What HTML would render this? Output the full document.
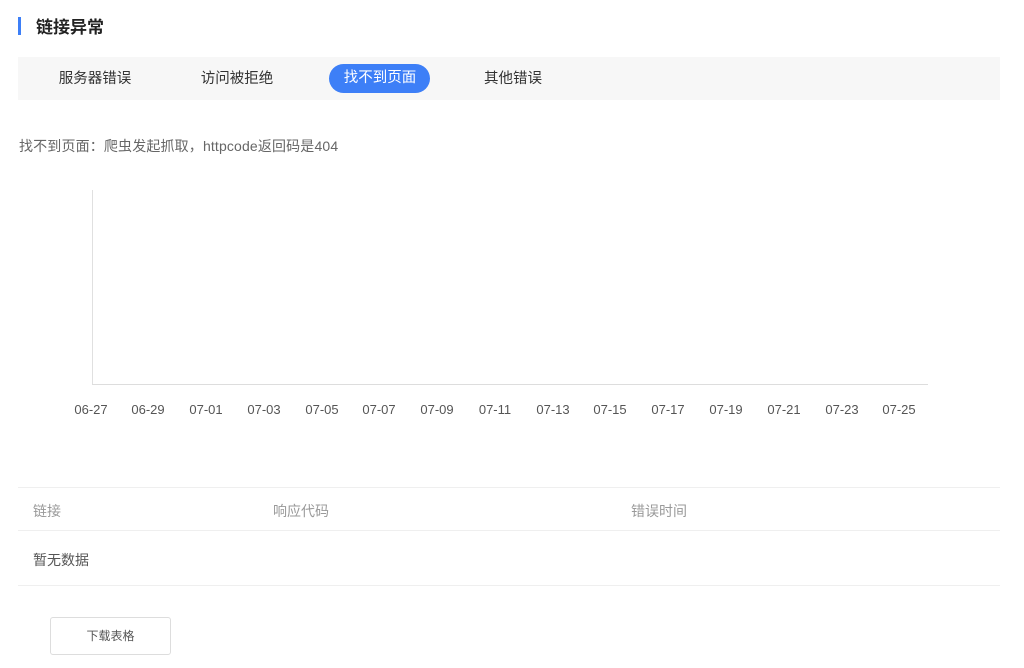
<!DOCTYPE html>
<html><head><meta charset="utf-8"><style>
body{margin:0;width:1024px;height:668px;background:#fff;font-family:"Liberation Sans","Noto Sans CJK SC",sans-serif;position:relative;overflow:hidden}
.a{position:absolute;white-space:nowrap}
.tab{position:absolute;top:65px;height:29px;line-height:29px;font-size:14.5px;color:#333;text-align:center;width:110px}
.xl{position:absolute;top:402px;font-size:13px;color:#555;width:50px;text-align:center}
.line{position:absolute;left:18px;width:982px;height:1px;background:#efefef}
</style></head><body>
<div class="a" style="left:18px;top:17px;width:3px;height:18px;background:#3d7ff7"></div>
<div class="a" style="left:36px;top:16px;font-size:17px;font-weight:bold;color:#222;line-height:24px">链接异常</div>
<div class="a" style="left:18px;top:57px;width:982px;height:43px;background:#f7f7f7"></div>
<div class="a" style="left:329px;top:64px;width:101px;height:29px;border-radius:15px;background:#3d7ff7"></div>
<div class="tab" style="left:40px">服务器错误</div>
<div class="tab" style="left:182px">访问被拒绝</div>
<div class="tab" style="left:325px;color:#fff;top:64px">找不到页面</div>
<div class="tab" style="left:458px">其他错误</div>
<div class="a" style="left:19px;top:137px;font-size:14px;color:#666;line-height:18px;letter-spacing:0.15px">找不到页面：爬虫发起抓取，httpcode返回码是404</div>
<div class="a" style="left:92px;top:190px;width:1px;height:195px;background:#e0e0e0"></div>
<div class="a" style="left:92px;top:384px;width:836px;height:1px;background:#ddd"></div>
<div class="xl" style="left:66px">06-27</div><div class="xl" style="left:123px">06-29</div><div class="xl" style="left:181px">07-01</div><div class="xl" style="left:239px">07-03</div><div class="xl" style="left:297px">07-05</div><div class="xl" style="left:354px">07-07</div><div class="xl" style="left:412px">07-09</div><div class="xl" style="left:470px">07-11</div><div class="xl" style="left:528px">07-13</div><div class="xl" style="left:585px">07-15</div><div class="xl" style="left:643px">07-17</div><div class="xl" style="left:701px">07-19</div><div class="xl" style="left:759px">07-21</div><div class="xl" style="left:817px">07-23</div><div class="xl" style="left:874px">07-25</div>
<div class="line" style="top:487px"></div>
<div class="line" style="top:530px"></div>
<div class="line" style="top:585px"></div>
<div class="a" style="left:33px;top:501px;font-size:14px;color:#999">链接</div>
<div class="a" style="left:273px;top:501px;font-size:14px;color:#999">响应代码</div>
<div class="a" style="left:631px;top:501px;font-size:14px;color:#999">错误时间</div>
<div class="a" style="left:33px;top:550px;font-size:14px;color:#555">暂无数据</div>
<div class="a" style="left:50px;top:617px;width:119px;height:36px;border:1px solid #ddd;border-radius:3px;font-size:12px;color:#555;text-align:center;line-height:37px">下载表格</div>
</body></html>
